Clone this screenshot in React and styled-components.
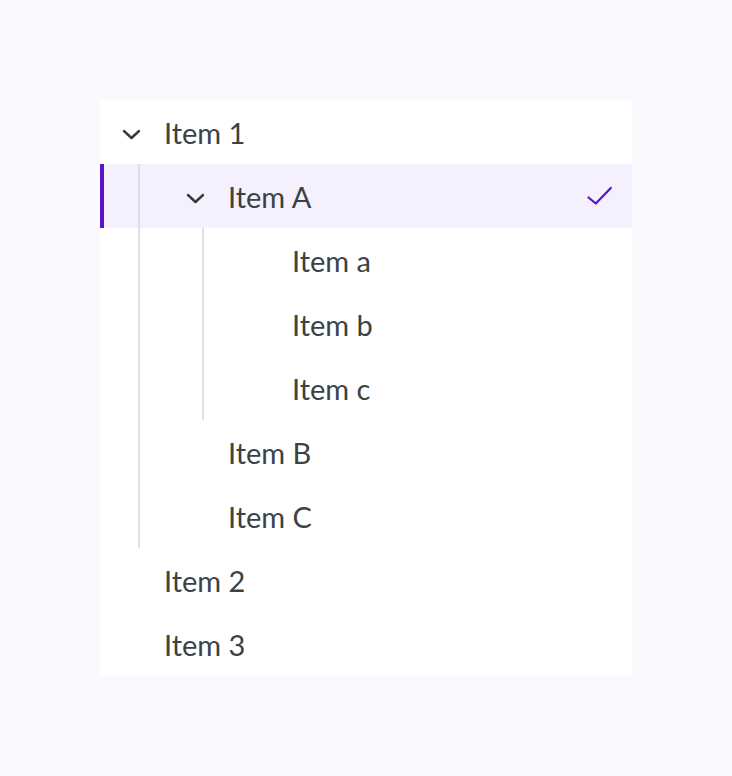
import React from "react";
import styled, { createGlobalStyle } from "styled-components";

const GlobalStyle = createGlobalStyle`
  html, body {
    margin: 0;
    padding: 0;
    background: #fbf9fe;
  }
  body {
    font-family: Lato, "Noto Sans", sans-serif;
  }
`;

const Page = styled.div`
  padding: 100px;
  min-height: 776px;
  box-sizing: border-box;
`;

const Tree = styled.ul`
  list-style: none;
  margin: 0;
  padding: 0;
  width: 532px;
  background: #fff;
`;

const Group = styled.ul`
  list-style: none;
  margin: 0;
  padding: 0;
  position: relative;

  &::before {
    content: "";
    position: absolute;
    top: 0;
    bottom: 0;
    left: ${(p) => 38 + p.$level * 64}px;
    width: 2px;
    background: #dde1e1;
    z-index: 1;
  }
`;

const Row = styled.div`
  position: relative;
  display: flex;
  align-items: center;
  height: 64px;
  padding-left: ${(p) => 16 + p.$level * 64}px;
  padding-right: 18px;
  background: ${(p) => (p.$selected ? "#f5f0fd" : "transparent")};
  color: #3a4343;
  font-size: 29px;
  cursor: pointer;

  &::before {
    content: "";
    display: ${(p) => (p.$selected ? "block" : "none")};
    position: absolute;
    left: 0;
    top: 0;
    bottom: 0;
    width: 4px;
    background: #5a12c6;
  }
`;

const Toggle = styled.span`
  width: 32px;
  height: 32px;
  flex: none;
  display: flex;
  margin-right: 16px;
`;

const Label = styled.span`
  flex: 1;
  line-height: 1;
  padding-top: 1px;
`;

const Check = styled.svg`
  width: 28px;
  height: 28px;
  flex: none;
`;

const Chevron = () => (
  <svg width="32" height="32" viewBox="0 0 32 32">
    <path
      d="M8 15l7.5 7 7.5-7"
      fill="none"
      stroke="#333b3b"
      strokeWidth="2.4"
      strokeLinecap="round"
      strokeLinejoin="round"
    />
  </svg>
);

const data = [
  {
    label: "Item 1",
    children: [
      {
        label: "Item A",
        selected: true,
        children: [{ label: "Item a" }, { label: "Item b" }, { label: "Item c" }],
      },
      { label: "Item B" },
      { label: "Item C" },
    ],
  },
  { label: "Item 2" },
  { label: "Item 3" },
];

const TreeItem = ({ item, level }) => (
  <li>
    <Row $level={level} $selected={item.selected}>
      <Toggle>{item.children && <Chevron />}</Toggle>
      <Label>{item.label}</Label>
      {item.selected && (
        <Check viewBox="0 0 28 28">
          <path
            d="M2.5 15.5l7.3 6 15-15.6"
            fill="none"
            stroke="#5a12c6"
            strokeWidth="2.2"
            strokeLinecap="round"
            strokeLinejoin="round"
          />
        </Check>
      )}
    </Row>
    {item.children && (
      <Group $level={level}>
        {item.children.map((c) => (
          <TreeItem key={c.label} item={c} level={level + 1} />
        ))}
      </Group>
    )}
  </li>
);

export default function App() {
  return (
    <Page>
      <GlobalStyle />
      <Tree>
        {data.map((item) => (
          <TreeItem key={item.label} item={item} level={0} />
        ))}
      </Tree>
    </Page>
  );
}
